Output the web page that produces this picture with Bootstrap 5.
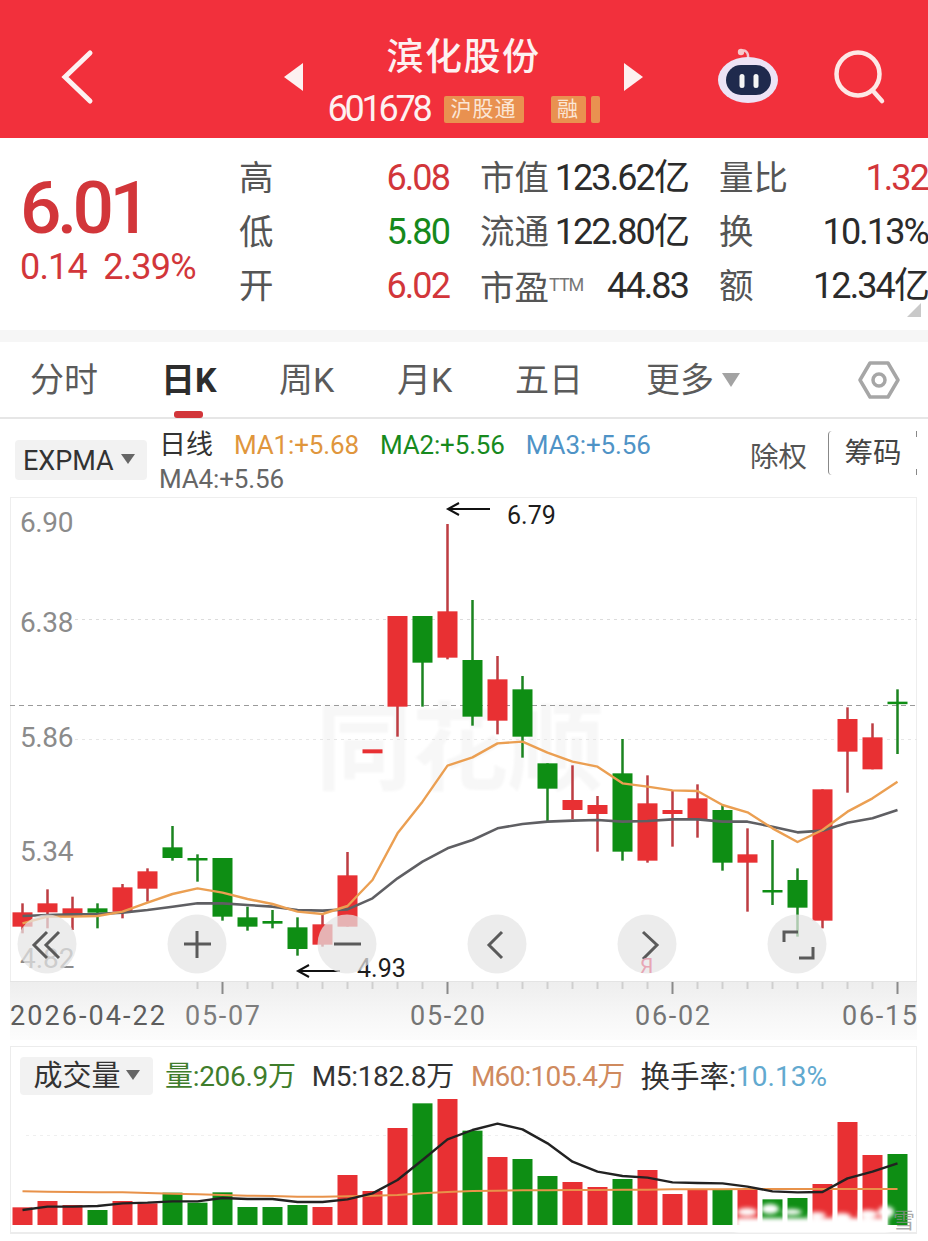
<!DOCTYPE html>
<html lang="zh-CN">
<head>
<meta charset="utf-8">
<title>滨化股份 601678</title>
<link href="https://cdn.jsdelivr.net/npm/bootstrap@5.3.0/dist/css/bootstrap.min.css" rel="stylesheet">
<style>
html,body{margin:0;background:#fff}
body{width:928px;height:1241px;overflow:hidden;font-family:Roboto,"Noto Sans CJK SC",sans-serif;color:#333}
.hdr{height:138px;background:#f2303c;color:#fdf1f1;padding-top:16px}
.hdr-back{margin-left:60px;width:36px;height:56px}
.hdr-tri{width:19px;height:28px;flex:none}
.hdr-tri-l{margin-left:188px}
.hdr-stack{width:321px;margin-top:16px}
.hdr-name{font-size:37px;line-height:40px;font-weight:500;letter-spacing:1.5px;margin-top:-8px}
.hdr-sub{margin-top:16px}
.hdr-code{font-size:36px;line-height:30px;letter-spacing:-3.2px}
.hdr-tag{background:#e99150;color:#fbe6d6;border-radius:2px;font-size:21px;line-height:27px;height:27px;letter-spacing:1px}
.tag-a{width:80px;margin-left:14px;text-align:center}
.tag-b{width:35px;margin-left:27px;text-align:center}
.tag-c{width:9px;margin-left:5px}
.hdr-bot{width:62px;height:62px;margin-left:74px;flex:none}
.hdr-find{width:56px;height:56px;margin-left:53px;flex:none}
.qt{height:192px;padding-top:13px;position:relative}
.qt-main{width:240px;padding-left:20px;color:#d2363a}
.qt-price{font-size:73px;line-height:70px;font-weight:500;letter-spacing:-4.6px;margin-top:22px}
.qt-chg{font-size:36px;line-height:38px;letter-spacing:-.8px;margin-top:5px;white-space:nowrap}
.qt-grid{display:grid;grid-template-columns:209px 207px 208px;column-gap:32px;grid-auto-rows:54px;width:688px}
.qt-cell{display:flex;justify-content:space-between;align-items:center;font-size:36px;letter-spacing:-1.9px;line-height:54px;white-space:nowrap;color:#2b2b2b}
.qt-lab{color:#555;font-size:34.5px;letter-spacing:0;margin-left:-1px}
.qt-ttm{font-size:18px;vertical-align:9px;letter-spacing:-1px;color:#777}
.c-up{color:#d2363a}.c-dn{color:#16891c}
.qt-corner{position:absolute;right:7px;bottom:13px;width:0;height:0;border-left:14px solid transparent;border-bottom:14px solid #c9c9c9}
.band{height:12px;background:#f6f6f6}
.tabs{height:77px;border-bottom:2px solid #e6e6e6;position:relative;padding-left:30px}
.tabs-grid{display:grid;grid-template-columns:131px 118px 118px 118px 131px 120px;font-size:34px;line-height:77px;color:#5b5b5b}
.tab-on{color:#2d2d2d;font-weight:700}
.tab-mark{position:absolute;left:174px;bottom:-1px;width:29px;height:7px;border-radius:3px;background:#d2363a}
.tab-tri{display:inline-block;width:0;height:0;border:9px solid transparent;border-top:14px solid #a3a3a3;border-bottom:0;margin-left:8px;vertical-align:5px}
.tab-hex{position:absolute;right:28px;top:18px;width:42px;height:40px}
.lgd{height:78px;position:relative;padding-top:9px}
.lgd-sel{width:132px;height:40px;margin:12px 0 0 15px;background:#f2f2f2;border-radius:4px;font-size:27px;line-height:42px;color:#333;padding-left:8px;flex:none;white-space:nowrap}
.sel-tri{display:inline-block;width:0;height:0;border:7px solid transparent;border-top:10px solid #666;border-bottom:0;margin-left:7px;vertical-align:6px}
.lgd-vals{margin-left:12px;width:552px;font-size:26px;line-height:34px;white-space:nowrap;letter-spacing:-.15px}
.lgd-vals span{margin-right:21px}
.lgd-1{color:#e0963c}.lgd-2{color:#178a1e}.lgd-3{color:#4f93c6}.lgd-4{color:#666}.lgd-0{color:#333;font-size:27px;letter-spacing:0}
.lgd-fq{margin-left:39px;margin-top:10px;font-size:28.5px;line-height:40px;color:#555;flex:none}
.lgd-chip{width:89px;height:44px;margin:3px 0 0 21px;flex:none;font-size:28.5px;line-height:46px;color:#444;text-align:center;border-left:1px solid #888;border-radius:4px;position:relative}
.lgd-chip::after{content:"";position:absolute;right:0;top:0;width:1px;height:100%;background:linear-gradient(#888 0 6px,transparent 6px calc(100% - 6px),#888 0)}
.plot{display:block;width:907px;height:543px;margin-left:10px}
.vol{width:907px;height:188px;margin:6px 0 0 10px;border:1px solid #ececec;border-width:1px 1px 2px 1px}
.vol-top{height:52px;padding:10px 0 0 9px;font-size:28px;line-height:40px;white-space:nowrap}
.vol-sel{width:133px;height:38px;background:#f2f2f2;border-radius:4px;color:#333;text-align:center;flex:none;font-size:29px;line-height:38px}
.vol-sel .sel-tri{margin-left:5px}
.vol-a{color:#3f7d2c;margin-left:12px;letter-spacing:-.3px}.vol-b{color:#333;margin-left:16px;letter-spacing:-.35px}.vol-c{color:#cf8a5e;margin-left:17px;letter-spacing:-.75px}.vol-d{color:#333;margin-left:16px;font-size:29.5px}.vol-e{color:#62a9cf}
.vol-plot{display:block;width:905px;height:134px}
</style>
</head>
<body>
<header class="hdr d-flex align-items-center">
  <svg class="hdr-back" viewBox="0 0 36 56" fill="none" stroke="#fdf1f1" stroke-width="5" stroke-linecap="round"><path d="M30 4 5 28l25 24"/></svg>
  <svg class="hdr-tri hdr-tri-l" viewBox="0 0 19 28"><path d="M19 0v28L0 14z" fill="#fdf1f1"/></svg>
  <div class="hdr-stack text-center">
    <div class="hdr-name">滨化股份</div>
    <div class="hdr-sub d-flex justify-content-center align-items-center">
      <span class="hdr-code">601678</span>
      <span class="hdr-tag tag-a">沪股通</span><span class="hdr-tag tag-b">融</span><span class="hdr-tag tag-c"></span>
    </div>
  </div>
  <svg class="hdr-tri" viewBox="0 0 19 28"><path d="M0 0v28L19 14z" fill="#fdf1f1"/></svg>
  <svg class="hdr-bot" viewBox="0 0 62 62">
    <path d="M24 6c3-3 8-1 7 7" fill="none" stroke="#f2c5cf" stroke-width="2.5"/>
    <circle cx="24" cy="6" r="3.2" fill="#f6c9cc"/>
    <ellipse cx="31" cy="34" rx="30" ry="23" fill="#ede3f5"/>
    <rect x="9" y="19" width="45" height="30" rx="15" fill="#1f2a4d"/>
    <rect x="22.5" y="28" width="5" height="14" rx="2.5" fill="#f5f5f5"/>
    <rect x="36.5" y="28" width="5" height="14" rx="2.5" fill="#f5f5f5"/>
  </svg>
  <svg class="hdr-find" viewBox="0 0 56 56" fill="none" stroke="#fde8e6" stroke-width="4.5" stroke-linecap="round"><circle cx="26" cy="25" r="21.5"/><path d="M42 43l8 9"/></svg>
</header>

<section class="qt d-flex">
  <div class="qt-main">
    <div class="qt-price">6.01</div>
    <div class="qt-chg">0.14&nbsp;&nbsp;2.39%</div>
  </div>
  <div class="qt-grid">
    <div class="qt-cell"><span class="qt-lab">高</span><span class="c-up">6.08</span></div>
    <div class="qt-cell"><span class="qt-lab">市值</span><span>123.62亿</span></div>
    <div class="qt-cell"><span class="qt-lab">量比</span><span class="c-up">1.32</span></div>
    <div class="qt-cell"><span class="qt-lab">低</span><span class="c-dn">5.80</span></div>
    <div class="qt-cell"><span class="qt-lab">流通</span><span>122.80亿</span></div>
    <div class="qt-cell"><span class="qt-lab">换</span><span>10.13%</span></div>
    <div class="qt-cell"><span class="qt-lab">开</span><span class="c-up">6.02</span></div>
    <div class="qt-cell"><span class="qt-lab">市盈<span class="qt-ttm">TTM</span></span><span>44.83</span></div>
    <div class="qt-cell"><span class="qt-lab">额</span><span>12.34亿</span></div>
  </div>
  <div class="qt-corner"></div>
</section>
<div class="band"></div>

<nav class="tabs">
  <div class="tabs-grid">
    <div>分时</div><div class="tab-on">日K</div><div>周K</div><div>月K</div><div>五日</div>
    <div class="text-nowrap">更多<span class="tab-tri"></span></div>
  </div>
  <span class="tab-mark"></span>
  <svg class="tab-hex" viewBox="0 0 42 40" fill="none" stroke="#a6a6a6" stroke-width="3.5" stroke-linejoin="round"><path d="M12 3h18l10 17-10 17H12L2 20z"/><circle cx="21" cy="20" r="6"/></svg>
</nav>

<section class="lgd d-flex">
  <div class="lgd-sel">EXPMA<span class="sel-tri"></span></div>
  <div class="lgd-vals">
    <div><span class="lgd-0">日线</span><span class="lgd-1">MA1:+5.68</span><span class="lgd-2">MA2:+5.56</span><span class="lgd-3">MA3:+5.56</span></div>
    <div><span class="lgd-4">MA4:+5.56</span></div>
  </div>
  <div class="lgd-fq">除权</div>
  <div class="lgd-chip">筹码</div>
</section>

<svg id="plot" class="plot" viewBox="10 497 907 543" font-family="Roboto,'Noto Sans CJK SC',sans-serif"></svg>

<section class="vol">
  <div class="vol-top d-flex">
    <div class="vol-sel">成交量<span class="sel-tri"></span></div>
    <span class="vol-a">量:206.9万</span><span class="vol-b">M5:182.8万</span><span class="vol-c">M60:105.4万</span><span class="vol-d">换手率:</span><span class="vol-e">10.13%</span>
  </div>
  <svg id="volplot" class="vol-plot" viewBox="11 1099 905 134" font-family="Roboto,'Noto Sans CJK SC',sans-serif"></svg>
</section>

<script>
var RED='#e83033',GREEN='#0e8e14',WR='#bd3d42',WG='#1b8420';
var cx=function(i){return 22.5+25*i};
var py=function(v){return 500+v/3};
/* wickTop, wickBottom, bodyTop, bodyBottom, up? (reference pixels, zoom scale) */
var K=[[1210,1300,1237,1280,1],[1168,1285,1210,1237,1],[1190,1290,1225,1250,1],[1210,1285,1225,1238,0],[1152,1255,1162,1235,1],[1105,1205,1114,1166,1],[978,1082,1042,1074,0],[1063,1145,1074,1081,0],[1074,1262,1074,1250,0],[1220,1292,1252,1280,0],[1230,1285,1263,1271,0],[1252,1367,1282,1347,0],[1245,1340,1273,1334,1],[1056,1280,1126,1280,1],[748,760,748,760,1],[348,710,348,620,1],[348,620,348,488,0],[72,478,334,473,1],[300,677,480,650,0],[468,703,538,662,1],[528,773,568,710,0],[790,965,790,866,0],[796,958,900,930,1],[888,1055,915,942,1],[717,1082,820,1055,0],[826,1088,910,1082,1],[870,1040,930,942,1],[853,1013,895,958,1],[915,1112,930,1088,0],[985,1235,1063,1088,1],[1020,1215,1170,1177,0],[1105,1310,1140,1223,0],[868,1285,868,1262,1],[622,878,657,755,1],[670,808,712,808,1],[568,762,605,612,0]];
var MA1=[1270,1250,1250,1248,1235,1208,1182,1165,1178,1197,1212,1235,1242,1218,1140,1000,905,797,772,730,725,758,785,800,850,860,871,873,915,937,985,1026,990,935,895,845];
var MA2=[1248,1245,1243,1242,1238,1230,1220,1210,1210,1215,1220,1230,1232,1228,1195,1135,1085,1045,1020,985,972,965,962,960,965,963,958,958,965,965,980,997,992,968,955,930];
var s='';
s+='<rect x="10" y="497" width="907" height="484" fill="#fff"/>';
s+='<path d="M10.5 497V981M916.5 497V981" stroke="#eee"/><path d="M10 497.5H917" stroke="#eee"/>';
s+='<path d="M10 981.5H917" stroke="#e4e4e4"/>';
s+='<defs><linearGradient id="ax" x1="0" y1="0" x2="0" y2="1"><stop offset="0" stop-color="#eeeeee"/><stop offset=".6" stop-color="#f7f7f7"/><stop offset="1" stop-color="#fcfcfc"/></linearGradient><filter id="wm"><feGaussianBlur stdDeviation="1.2"/></filter></defs>';
s+='<rect x="10" y="982" width="907" height="58" fill="url(#ax)"/>';
/* watermark */
s+='<text x="316" y="782" font-size="96" font-weight="700" fill="#f7f7f7" filter="url(#wm)">同花顺</text>';
/* grid */
[[619,'#dcdcdc','3 4'],[739,'#e6e6e6','3 4']].forEach(function(g){s+='<path d="M75 '+(g[0]+.5)+'H917" stroke="'+g[1]+'" stroke-dasharray="'+g[2]+'"/>'});
s+='<path d="M10 705.5H917" stroke="#9a9a9a" stroke-dasharray="5 4"/>';
/* price labels */
[[6.90,532],[6.38,632],[5.86,747],[5.34,861]].forEach(function(l){s+='<text x="20" y="'+l[1]+'" font-size="28" fill="#8b8b8b" letter-spacing="-.4">'+l[0].toFixed(2)+'</text>'});
/* candles */
K.forEach(function(k,i){var x=cx(i),up=k[4];
 if(k[0]<k[2]||k[1]>k[3])s+='<rect x="'+(x-1.25)+'" y="'+py(k[0])+'" width="2.5" height="'+(k[1]-k[0])/3+'" fill="'+(up?WR:WG)+'"/>';
 s+='<rect x="'+(x-10)+'" y="'+py(k[2])+'" width="20" height="'+Math.max((k[3]-k[2])/3,2.5)+'" fill="'+(up?RED:GREEN)+'"/>';
});
function line(a,f,c,w){return '<polyline fill="none" stroke="'+c+'" stroke-width="'+w+'" stroke-linejoin="round" points="'+a.map(function(v,i){return cx(i)+','+f(v)}).join(' ')+'"/>'}
s+=line(MA2,py,'#5f5f63',2.6);
s+=line(MA1,py,'#eb9f52',2.4);
/* ticks */
for(var i=7;i<36;i++){var maj=(i==8||i==17||i==26||i==35);s+='<rect x="'+(cx(i)-1)+'" y="982" width="2" height="'+(maj?12:7)+'" fill="'+(maj?'#8a8a8a':'#cfcfcf')+'"/>'}
/* date labels */
[['2026-04-22',10,'#5d5d5d'],['05-07',185,'#7d7d7d'],['05-20',410,'#757575'],['06-02',635,'#757575'],['06-15',842,'#757575']].forEach(function(d){
 s+='<text x="'+d[1]+'" y="1025" font-size="27" fill="'+d[2]+'" textLength="'+(d[0].length==10?155:75)+'" lengthAdjust="spacing">'+d[0]+'</text>'});
/* annotations */
s+='<text x="507" y="524" font-size="25" fill="#1d1d1d">6.79</text>';
s+='<text x="357" y="977" font-size="25" fill="#1d1d1d">4.93</text>';
s+='<path d="M490 509H449M459 503l-11 6 11 6" fill="none" stroke="#111" stroke-width="2"/>';
s+='<path d="M340 971H299M309 965l-11 6 11 6" fill="none" stroke="#111" stroke-width="2"/>';
/* faded label under button */
s+='<text x="20" y="968" font-size="28" fill="#8b8b8b">4.82</text>';
/* round buttons */
[47,197,347,497,647,797].forEach(function(x){s+='<circle cx="'+x+'" cy="944" r="29.5" fill="#e4e4e4" fill-opacity=".72"/>'});
var ic='fill="none" stroke="#5a5a5a" stroke-width="3"';
s+='<path '+ic+' d="M47 932 34 945l13 13M59 932 46 945l13 13"/>';
s+='<path '+ic+' d="M184 944h27M197 931v27"/>';
s+='<path '+ic+' d="M334 944h27"/>';
s+='<path '+ic+' d="M502 932 489 945l13 13"/>';
s+='<path '+ic+' d="M643 932l14 13-14 14"/>';
s+='<path '+ic+' d="M784 942v-10h14M813 947v11h-14"/>';
s+='<text x="640" y="973" font-size="21" fill="#e7a6b4">Я</text>';
document.getElementById('plot').innerHTML=s;

var V=[[622,1],[603,1],[615,1],[630,0],[603,1],[610,1],[578,0],[608,0],[577,0],[621,0],[621,0],[615,0],[621,1],[525,1],[573,1],[384,1],[310,0],[297,1],[392,0],[471,1],[477,0],[528,0],[546,1],[561,1],[537,0],[510,1],[582,1],[567,1],[567,0],[567,1],[598,0],[594,0],[552,1],[366,1],[465,1],[462,0]];
var M5=[630,620,620,618,610,608,604,604,594,597,597,606,606,598,580,540,480,418,390,371,388,430,485,515,528,533,547,549,550,560,574,577,576,535,515,490];
var M60=[574,575,576,577,577,579,581,583,585,587,588,590,590,589,587,585,580,576,573,572,571,571,570,570,569,569,568,568,568,567,567,567,567,567,567,567];
var vy=function(v){return 1000+v/3};
var t='<path d="M26 1135.5H916" stroke="#efefef" stroke-dasharray="3 4"/>';
V.forEach(function(b,i){t+='<rect x="'+(cx(i)-10)+'" y="'+vy(b[0])+'" width="20" height="'+(1225-vy(b[0]))+'" fill="'+(b[1]?RED:GREEN)+'"/>'});
t+=line(M60,vy,'#e8924a',2);
t+=line(M5,vy,'#222',2.4);
/* blurred corner signature */
t+='<defs><filter id="bl" x="-20%" y="-50%" width="140%" height="200%"><feGaussianBlur stdDeviation="2"/></filter></defs>';
t+='<g fill="#fff" filter="url(#bl)"><rect x="736" y="1218" width="152" height="15"/><ellipse cx="747" cy="1212" rx="10" ry="4"/><ellipse cx="770" cy="1209" rx="9" ry="5"/><ellipse cx="792" cy="1212" rx="10" ry="3"/><ellipse cx="817" cy="1215" rx="9" ry="3"/><ellipse cx="842" cy="1216" rx="9" ry="3"/><ellipse cx="868" cy="1214" rx="10" ry="4"/><ellipse cx="886" cy="1212" rx="8" ry="6"/></g>';
t+='<text x="893" y="1228" font-size="22" fill="#8f8f8f" fill-opacity=".75">雪</text>';
document.getElementById('volplot').innerHTML=t;
</script>
<script src="https://cdn.jsdelivr.net/npm/bootstrap@5.3.0/dist/js/bootstrap.bundle.min.js"></script>
</body>
</html>
